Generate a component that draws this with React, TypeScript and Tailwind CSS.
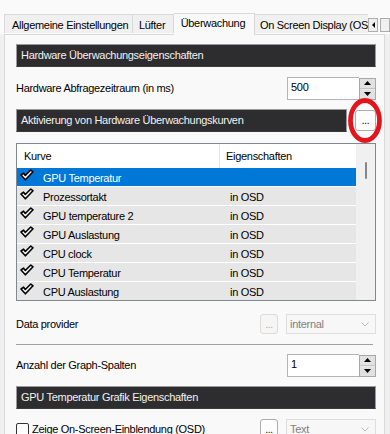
const FONT = "font-['Liberation_Sans',Arial,sans-serif] text-[11px] tracking-[-0.3px]"

const curves = [
  { name: 'GPU Temperatur', prop: '' },
  { name: 'Prozessortakt', prop: 'in OSD' },
  { name: 'GPU temperature 2', prop: 'in OSD' },
  { name: 'GPU Auslastung', prop: 'in OSD' },
  { name: 'CPU clock', prop: 'in OSD' },
  { name: 'CPU Temperatur', prop: 'in OSD' },
  { name: 'CPU Auslastung', prop: 'in OSD' },
]

function Check() {
  return (
    <svg width="14" height="12" viewBox="0 0 14 12" className="shrink-0">
      <path
        d="M1 6 L3.6 4.2 L5.3 6.5 L10.8 1 L13 2.8 L5.4 10.8 Z"
        fill="#fff"
        stroke="#000"
        strokeWidth="1.6"
        strokeLinejoin="round"
      />
    </svg>
  )
}

function Tri({ up }: { up?: boolean }) {
  return (
    <svg width="7" height="4" viewBox="0 0 7 4">
      <path d={up ? 'M0 4 L3.5 0 L7 4 Z' : 'M0 0 L7 0 L3.5 4 Z'} fill="#000" />
    </svg>
  )
}

function Header({ title, className = '' }: { title: string; className?: string }) {
  return (
    <div
      className={`h-[23px] bg-[#2d2d30] border border-[#9a9a9a] border-b-[#3a3a3a] text-[#f2f2f2] flex items-center pl-[4px] ${className}`}
    >
      {title}
    </div>
  )
}

function Spinner({ value }: { value: string }) {
  return (
    <div className="flex items-center ml-auto">
      <div className="w-[72px] h-[23px] bg-white border border-[#b4b4b4] border-r-0 flex items-center pl-[3px] pb-[3px] text-black">
        {value}
      </div>
      <div className="w-[17px] h-[22px] flex flex-col gap-px border border-[#a8a8a8] bg-[#e8e8e8]">
        <div className="flex-1 flex items-center justify-center bg-[#e1e1e1] border-b border-[#c4c4c4]">
          <Tri up />
        </div>
        <div className="flex-1 flex items-center justify-center bg-[#e1e1e1]">
          <Tri />
        </div>
      </div>
    </div>
  )
}

function DotsButton({ disabled }: { disabled?: boolean }) {
  return (
    <div
      className={`w-[18px] h-[20px] rounded-[3px] flex items-end justify-center pb-[3px] text-[10px] leading-none ${
        disabled ? 'border border-[#dcdcdc] bg-[#f5f5f5] text-[#a8a8a8]' : 'border border-[#adadad] bg-[#fdfdfd] text-black'
      }`}
    >
      ...
    </div>
  )
}

function Combo({ value }: { value: string }) {
  return (
    <div className="w-[90px] h-[20px] ml-[8px] border border-[#dedede] bg-[#f7f7f7] flex items-center pl-[3px] pr-[6px] text-[#7f7f7f]">
      <span className="flex-1">{value}</span>
      <svg width="8" height="5" viewBox="0 0 8 5">
        <path d="M0.5 0.5 L4 4 L7.5 0.5" fill="none" stroke="#b8b8b8" strokeWidth="1" />
      </svg>
    </div>
  )
}

export default function App() {
  return (
    <div className={`w-[390px] h-[434px] overflow-hidden bg-[#f0f0f0] flex flex-col ${FONT} text-black`}>
      {/* tab strip */}
      <div className="h-[34px] shrink-0 flex items-end pl-[4px] bg-[#fafafa]">
        <div className="h-[19px] mb-px w-[130px] border border-b-0 border-[#d9d9d9] bg-[#f0f0f0] pl-[7px] pt-[2px] whitespace-nowrap">
          Allgemeine Einstellungen
        </div>
        <div className="h-[19px] mb-px w-[41px] border border-b-0 border-l-0 border-[#d9d9d9] bg-[#f0f0f0] pl-[6px] pt-[2px]">
          Lüfter
        </div>
        <div className="h-[22px] w-[82px] border border-b-0 border-l-0 border-[#d9d9d9] bg-[#f9f9f9] pl-[7px] pt-[1px] relative z-10 -mb-px whitespace-nowrap">
          Überwachung
        </div>
        <div className="h-[19px] mb-px w-[114px] border-t border-[#d9d9d9] bg-[#f0f0f0] pl-[5px] pt-[2px] overflow-hidden whitespace-nowrap">
          On Screen Display (OS
        </div>
        <div className="self-start mt-[18px] flex gap-[2px]">
          <div className="w-[10px] h-[14px] border border-[#adadad] bg-[#f0f0f0] flex items-center justify-center">
            <svg width="3" height="6" viewBox="0 0 3 6">
              <path d="M3 0 L0 3 L3 6 Z" fill="#000" />
            </svg>
          </div>
          <div className="w-[10px] h-[14px] border border-[#adadad] bg-[#f0f0f0]" />
        </div>
      </div>

      {/* tab page */}
      <div className="w-[381px] ml-[4px] flex-1 border border-b-0 border-[#d9d9d9] bg-[#f9f9f9] pl-[11px] pr-[8px] flex flex-col">
        <Header title="Hardware Überwachungseigenschaften" className="mt-[9px]" />

        <div className="mt-[10px] flex items-center">
          <span>Hardware Abfragezeitraum (in ms)</span>
          <Spinner value="500" />
        </div>

        <div className="mt-[9px] flex items-center">
          <Header title="Aktivierung von Hardware Überwachungskurven" className="w-[331px]" />
          <div className="relative ml-auto">
            <div className="w-[21px] h-[21px] rounded-[3px] border border-[#adadad] bg-[#fdfdfd] flex items-end justify-center pb-[4px] text-[10px] leading-none">
              ...
            </div>
            <svg width="40" height="50" viewBox="0 0 40 50" className="absolute left-[-9px] top-[-13px] pointer-events-none">
              <ellipse cx="19" cy="23.5" rx="14.5" ry="20" fill="none" stroke="#e3151c" strokeWidth="4.8" />
            </svg>
          </div>
        </div>

        {/* list view */}
        <div className="mt-[11px] h-[158px] border border-[#828790] bg-white flex overflow-hidden">
          <div className="w-[339px] flex flex-col">
            <div className="h-[24px] shrink-0 flex items-center">
              <div className="w-[203px] h-full border-r border-[#e5e5e5] pl-[7px] flex items-center">Kurve</div>
              <div className="pl-[6px]">Eigenschaften</div>
            </div>
            {curves.map((c, i) => (
              <div
                key={c.name}
                className={`h-[19px] shrink-0 border-b border-white flex items-start ${
                  i === 0 ? 'bg-[#0078d7] text-white' : 'bg-[#e6e6e6]'
                }`}
              >
                <div className="w-[26px] pl-[3px] pt-[1px]">
                  <Check />
                </div>
                <div className="w-[187px] pt-[2px]">{c.name}</div>
                <div className="pt-[2px]">{c.prop}</div>
              </div>
            ))}
            <div className="h-[19px] shrink-0 bg-[#e6e6e6] flex items-start">
              <div className="w-[26px] pl-[3px] pt-[1px]">
                <Check />
              </div>
            </div>
          </div>
          <div className="flex-1 bg-[#f0f0f0] relative">
            <div className="absolute left-[9px] top-[18px] w-[2px] h-[17px] bg-[#868686] rounded-full" />
          </div>
        </div>

        <div className="mt-[13px] h-[20px] flex items-center">
          <span>Data provider</span>
          <div className="ml-auto flex items-center">
            <DotsButton disabled />
            <Combo value="internal" />
          </div>
        </div>

        <div className="mt-[10px] h-px w-[357px] bg-[#a0a0a0]" />

        <div className="mt-[9px] flex items-center">
          <span>Anzahl der Graph-Spalten</span>
          <Spinner value="1" />
        </div>

        <Header title="GPU Temperatur Grafik Eigenschaften" className="mt-[9px]" />

        <div className="mt-[10px] h-[20px] flex items-center">
          <div className="w-[13px] h-[13px] border border-[#333] rounded-[2px] bg-white" />
          <span className="ml-[3px]">Zeige On-Screen-Einblendung (OSD)</span>
          <div className="ml-auto flex items-center">
            <DotsButton />
            <Combo value="Text" />
          </div>
        </div>
      </div>
    </div>
  )
}
